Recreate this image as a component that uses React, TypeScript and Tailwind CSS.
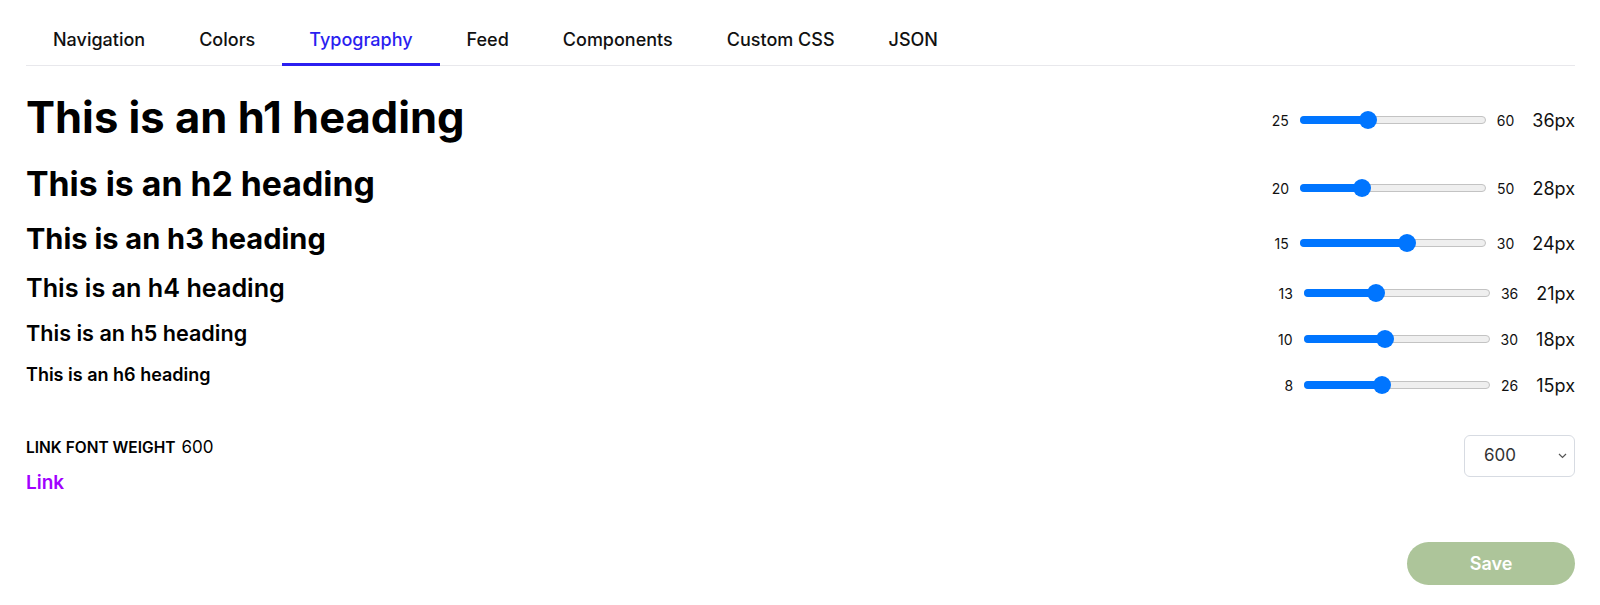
import { useState } from 'react';

interface HeadingSize {
  tag: 'h1' | 'h2' | 'h3' | 'h4' | 'h5' | 'h6';
  min: number;
  max: number;
  value: number;
  // where the thumb sits along the track, 0..1
  pos: number;
}

const tabs = ['Navigation', 'Colors', 'Typography', 'Feed', 'Components', 'Custom CSS', 'JSON'];

const sizes: HeadingSize[] = [
  { tag: 'h1', min: 25, max: 60, value: 36, pos: 0.35 },
  { tag: 'h2', min: 20, max: 50, value: 28, pos: 0.315 },
  { tag: 'h3', min: 15, max: 30, value: 24, pos: 0.585 },
  { tag: 'h4', min: 13, max: 36, value: 21, pos: 0.375 },
  { tag: 'h5', min: 10, max: 30, value: 18, pos: 0.43 },
  { tag: 'h6', min: 8, max: 26, value: 15, pos: 0.41 },
];

// row spacing and heading weight per level (preview renders at 1.2x)
const rowStyles: Record<HeadingSize['tag'], { row: string; heading: string }> = {
  h1: { row: 'mt-[34px]', heading: 'text-[43.5px] font-bold mb-[6px]' },
  h2: { row: 'mt-[28px]', heading: 'text-[33.8px] font-bold mb-[8px]' },
  h3: { row: 'mt-[15px]', heading: 'text-[29px] font-bold mb-[8px]' },
  h4: { row: 'mt-[10px]', heading: 'text-[25.2px] font-semibold mb-[8px]' },
  h5: { row: 'mt-[6px]', heading: 'text-[21.6px] font-semibold mb-[12px]' },
  h6: { row: 'mt-[6px]', heading: 'text-[18px] font-semibold mb-[20px]' },
};

function SizeSlider({ min, max, value, pos }: HeadingSize) {
  const thumb = 9 + pos * 168;
  return (
    <div className="flex items-center">
      <span className="text-[14px] text-[#111]">{min}</span>
      <div className="relative ml-[11px] h-[8px] w-[186px] rounded-full border border-[#c3c3c3] bg-[#efefef]">
        <div className="h-[8px] -mt-px -ml-px rounded-full bg-[#0075ff]" style={{ width: thumb }} />
        <div
          className="absolute top-1/2 h-[18px] w-[18px] -translate-x-1/2 -translate-y-1/2 rounded-full bg-[#0075ff]"
          style={{ left: thumb - 1 }}
        />
      </div>
      <span className="ml-[11px] text-[14px] text-[#111]">{max}</span>
      <span className="ml-[18px] text-[18px] text-[#111]">{value}px</span>
    </div>
  );
}

export default function App() {
  const [active, setActive] = useState('Typography');
  const [weight, setWeight] = useState('600');

  return (
    <div className="min-h-screen bg-white pl-[26px] pr-[25px] pt-[16px] font-['Inter',sans-serif] text-black">
      {/* Settings tabs */}
      <div className="flex border-b border-[#e8e8ec]">
        {tabs.map((tab) => (
          <button
            key={tab}
            onClick={() => setActive(tab)}
            className={
              'h-[50px] -mb-px px-[27px] border-b-[3px] text-[18px] font-medium ' +
              (active === tab ? 'border-[#2b1ff0] text-[#2b1ff0]' : 'border-transparent text-[#111]')
            }
          >
            {tab}
          </button>
        ))}
      </div>

      {/* Heading sizes */}
      <div className="flex flex-col">
        {sizes.map((s) => {
          const Tag = s.tag;
          const st = rowStyles[s.tag];
          return (
            <div key={s.tag} className={'flex h-[40px] items-center justify-between ' + st.row}>
              <Tag className={'leading-tight ' + st.heading}>This is an {s.tag} heading</Tag>
              <SizeSlider {...s} />
            </div>
          );
        })}
      </div>

      {/* Link weight */}
      <div className="mt-[30px] flex items-start justify-between">
        <div className="flex flex-col">
          <div className="flex h-[26px] items-center gap-[6px]">
            <span className="text-[15.5px] font-semibold uppercase">Link font weight</span>
            <span className="text-[17px]">{weight}</span>
          </div>
          <a href="#" className="mt-[10px] text-[19px] font-semibold leading-[24px] text-[#a100ff]">
            Link
          </a>
        </div>
        <div className="relative">
          <select
            value={weight}
            onChange={(e) => setWeight(e.target.value)}
            className="h-[42px] w-[111px] appearance-none rounded-[6px] border border-[#d7dbe2] bg-white pl-[19px] text-[17px] text-[#333]"
          >
            {['300', '400', '500', '600', '700', '800'].map((w) => (
              <option key={w} value={w}>
                {w}
              </option>
            ))}
          </select>
          <svg
            className="pointer-events-none absolute right-[8px] top-[18px]"
            width="9"
            height="6"
            viewBox="0 0 9 6"
            fill="none"
          >
            <path d="M1 1l3.5 3.5L8 1" stroke="#555" strokeWidth="1.2" />
          </svg>
        </div>
      </div>

      <div className="mt-[47px] flex justify-end">
        <button className="h-[43px] w-[168px] rounded-full bg-[#adc59a] text-[18px] font-semibold text-white">
          Save
        </button>
      </div>
    </div>
  );
}
